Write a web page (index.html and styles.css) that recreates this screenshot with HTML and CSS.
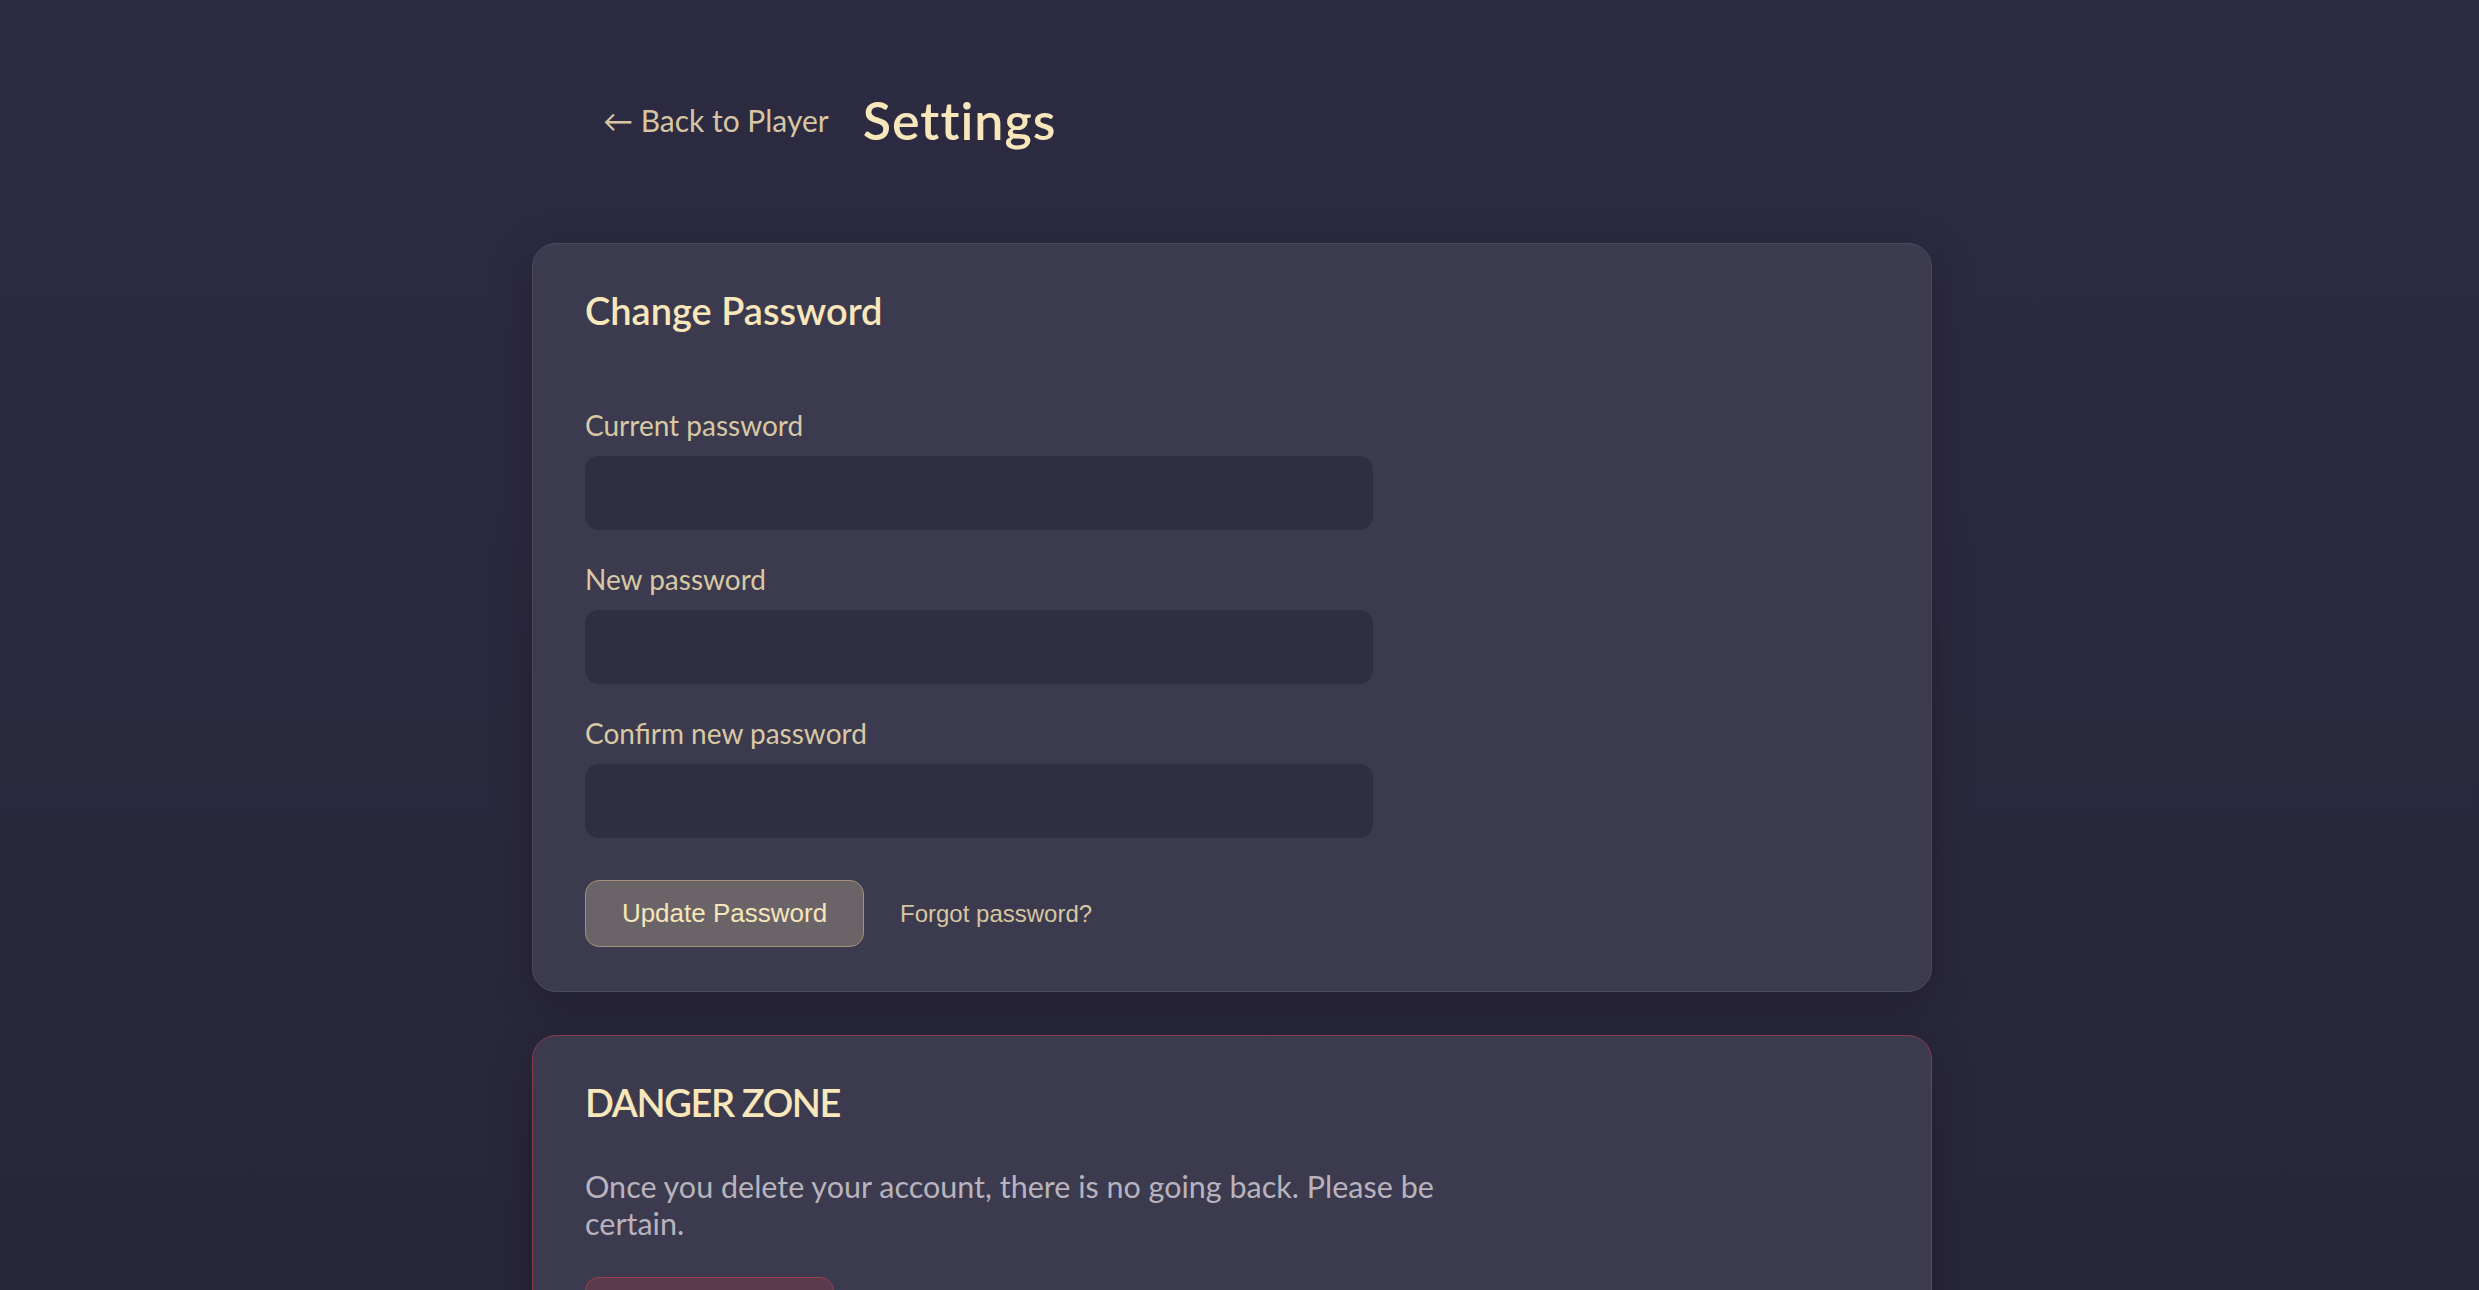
FILE: index.html
```html
<!DOCTYPE html>
<html lang="en">
<head>
<meta charset="utf-8">
<title>Settings</title>
<link rel="stylesheet" href="styles.css">
</head>
<body>
<div class="page">
  <header class="header">
    <a class="back-link" href="#">← Back to Player</a>
    <h1 class="page-title">Settings</h1>
  </header>

  <section class="card">
    <h2 class="card-title">Change Password</h2>
    <form class="form">
      <div class="field">
        <label class="label" for="cur">Current password</label>
        <input class="input" id="cur" type="password">
      </div>
      <div class="field">
        <label class="label" for="new">New password</label>
        <input class="input" id="new" type="password">
      </div>
      <div class="field">
        <label class="label" for="conf">Confirm new password</label>
        <input class="input" id="conf" type="password">
      </div>
      <div class="actions">
        <button class="btn-primary" type="button">Update Password</button>
        <button class="btn-link" type="button">Forgot password?</button>
      </div>
    </form>
  </section>

  <section class="card card-danger">
    <h2 class="card-title danger-title">DANGER ZONE</h2>
    <p class="danger-text">Once you delete your account, there is no going back. Please be certain.</p>
    <button class="btn-danger" type="button">Delete Account</button>
  </section>
</div>
</body>
</html>
```

FILE: styles.css
```css
html, body {
  margin: 0;
  padding: 0;
}

body {
  background: linear-gradient(180deg, #2d2b42 0%, #2a283d 60%, #27253a 100%);
  min-height: 100vh;
  box-sizing: border-box;
  padding-right: 15px;
  font-family: Lato, "Noto Sans", sans-serif;
  color: #f7e6b9;
}

.page {
  width: 1400px;
  margin: 0 auto;
  padding-bottom: 80px;
}

.header {
  display: flex;
  align-items: center;
  gap: 34px;
  padding: 82px 0 0 71px;
  height: 76px;
}

.back-link {
  color: #d6c6a1;
  text-decoration: none;
  font-size: 30px;
  line-height: 36px;
}

.page-title {
  margin: 0;
  font-size: 52px;
  line-height: 58px;
  font-weight: 600;
  letter-spacing: 1px;
  color: #f8e7ba;
}

.card {
  margin-top: 85px;
  background: #3c3a4e;
  border: 1px solid #4c4a5f;
  border-radius: 24px;
  padding: 43px 52px 44px;
  box-shadow: 0 10px 40px rgba(10, 8, 24, 0.25);
}

.card + .card {
  margin-top: 43px;
}

.card-title {
  margin: 0 0 75px;
  font-size: 38px;
  line-height: 46px;
  font-weight: 600;
  color: #f8e7ba;
}

.form {
  display: flex;
  flex-direction: column;
}

.field {
  display: flex;
  flex-direction: column;
  margin-bottom: 32px;
}

.label {
  font-size: 28px;
  line-height: 34px;
  color: #d8c8a3;
  margin-bottom: 14px;
}

.input {
  width: 788px;
  height: 74px;
  box-sizing: border-box;
  background: #302e42;
  border: none;
  border-radius: 14px;
  padding: 0 20px;
  color: #f7e6b9;
  font-size: 26px;
}

.actions {
  display: flex;
  align-items: center;
  gap: 36px;
  margin-top: 10px;
}

.btn-primary {
  height: 67px;
  width: 279px;
  box-sizing: border-box;
  background: #6a6468;
  border: 1px solid #a39279;
  border-radius: 14px;
  color: #f7e6b9;
  font-family: "Liberation Sans", Arial, sans-serif;
  font-size: 26px;
  padding: 0;
}

.btn-link {
  background: none;
  border: none;
  padding: 0;
  color: #d6c6a1;
  font-family: "Liberation Sans", Arial, sans-serif;
  font-size: 24px;
}

.card-danger {
  border-color: #8a3b4c;
}

.danger-title {
  margin-bottom: 43px;
  letter-spacing: -1.4px;
}

.danger-text {
  margin: 0 0 36px;
  max-width: 900px;
  font-size: 30.5px;
  line-height: 36.6px;
  color: #b9b3bd;
}

.btn-danger {
  height: 67px;
  width: 249px;
  box-sizing: border-box;
  background: #5a3a4b;
  border: 1px solid #9c4152;
  border-radius: 14px;
  color: #f7e6b9;
  font-family: "Liberation Sans", Arial, sans-serif;
  font-size: 26px;
}
```
